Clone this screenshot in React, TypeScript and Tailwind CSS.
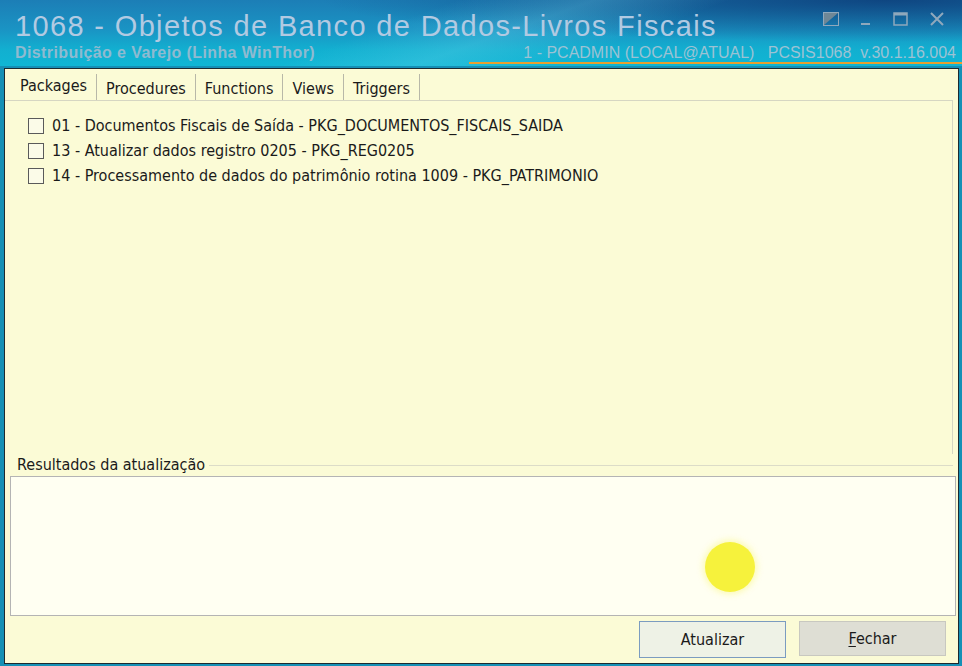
import { useState } from 'react';

const tabs = ['Packages', 'Procedures', 'Functions', 'Views', 'Triggers'];

const packages = [
  '01 - Documentos Fiscais de Saída - PKG_DOCUMENTOS_FISCAIS_SAIDA',
  '13 - Atualizar dados registro 0205 - PKG_REG0205',
  '14 - Processamento de dados do patrimônio rotina 1009 - PKG_PATRIMONIO',
];

const uiFont = { fontFamily: '"DejaVu Sans Condensed", "DejaVu Sans", sans-serif' };

const TitleBar = () => (
  <div className="relative h-[66px] bg-[linear-gradient(to_bottom,#1c7eb6_0%,#1a94c4_45%,#12afd0_75%,#10b6d4_100%)] overflow-hidden">
    {/* dark corner and light swoosh of the glass frame */}
    <div className="absolute inset-0 bg-[radial-gradient(ellipse_at_92%_0%,rgba(12,60,120,0.85)_0%,rgba(12,60,120,0)_45%)]" />
    <div className="absolute inset-0 bg-[linear-gradient(160deg,rgba(255,255,255,0)_40%,rgba(120,220,240,0.25)_52%,rgba(255,255,255,0)_64%)]" />
    <div className="relative flex items-start justify-between pl-[15px] pr-4 pt-[9px]">
      <h1 className="text-[29px] leading-[34px] tracking-[1.35px] text-[#b2cae2] font-['Liberation_Sans',sans-serif]">
        1068 - Objetos de Banco de Dados-Livros Fiscais
      </h1>
      <div className="flex items-center gap-[22px] pt-[3px] pr-[2px] text-[#8fa8bc]">
        <svg width="16" height="14" viewBox="0 0 16 14">
          <rect x="0.5" y="0.5" width="15" height="13" fill="none" stroke="currentColor" />
          <path d="M1 13 L1 1 L15 1 Z" fill="#6f8796" />
        </svg>
        <svg width="10" height="14" viewBox="0 0 10 14">
          <rect x="0" y="11" width="9" height="2" fill="currentColor" />
        </svg>
        <svg width="15" height="14" viewBox="0 0 15 14">
          <rect x="1" y="1" width="13" height="12" fill="none" stroke="currentColor" strokeWidth="1.5" />
          <rect x="1" y="1" width="13" height="2.5" fill="currentColor" />
        </svg>
        <svg width="14" height="14" viewBox="0 0 14 14">
          <path d="M1 1 L13 13 M13 1 L1 13" stroke="currentColor" strokeWidth="2" />
        </svg>
      </div>
    </div>
    <div className="relative flex items-end justify-between pl-[15px] pr-[6px] mt-[1px] leading-[18px] font-['Liberation_Sans',sans-serif]">
      <span className="text-[16px] font-bold tracking-[0.4px] text-[#8fbad0]">Distribuição e Varejo (Linha WinThor)</span>
      <span className="text-[16px] text-[#9cc2d4] whitespace-pre">
        1 - PCADMIN (LOCAL@ATUAL)   PCSIS1068  v.30.1.16.004
      </span>
    </div>
    <div className="absolute left-[469px] right-0 bottom-[2px] h-[2px] bg-[#e8a030]" />
  </div>
);

const App = () => {
  const [active, setActive] = useState(0);
  const [checked, setChecked] = useState<boolean[]>([false, false, false]);

  return (
    <div className="w-[962px] h-[666px] bg-[#1590b6] flex flex-col overflow-hidden" style={uiFont}>
      <TitleBar />
      <div className="flex-1 ml-[4px] mr-[3px] mt-[2px] border border-[#1c2a30] bg-[#fbfbd6] flex flex-col text-[#1a1a1a]">
        {/* Tab strip */}
        <div className="flex items-end h-[31px] pl-[6px] pt-[4px]">
          {tabs.map((t, i) => (
            <button
              key={t}
              onClick={() => setActive(i)}
              className={`h-[26px] px-[9px] text-[16px] flex items-center border-r border-[#b8b8a8] ${
                i === active ? 'bg-[#fbfbd6] pb-[3px]' : 'pt-[3px]'
              }`}
            >
              {t}
            </button>
          ))}
        </div>

        {/* Tab page */}
        <div className="h-[354px] mr-[5px] border-t border-r border-[#d6d6c2] pl-[23px] pt-[16px] flex flex-col gap-[7px]">
          {packages.map((p, i) => (
            <label key={p} className="flex items-center gap-[8px] text-[16px] leading-[18px] cursor-pointer">
              <span
                onClick={() => setChecked((c) => c.map((v, j) => (j === i ? !v : v)))}
                className="w-[16px] h-[16px] border border-[#5a5a5a] bg-[#fbfbe8] flex items-center justify-center"
              >
                {checked[i] && (
                  <svg width="11" height="11" viewBox="0 0 11 11">
                    <path d="M1 5.5 L4 8.5 L10 1.5" stroke="#222" strokeWidth="1.6" fill="none" />
                  </svg>
                )}
              </span>
              {p}
            </label>
          ))}
        </div>

        {/* Results group */}
        <div className="flex items-center gap-[4px] pl-[12px] pr-[5px] h-[22px]">
          <span className="text-[16px] leading-[18px]">Resultados da atualização</span>
          <div className="flex-1 h-px bg-[#dcdcc8] mt-[1px]" />
        </div>
        <div className="relative ml-[5px] mr-[2px] h-[140px] border border-[#b4b4b4] bg-[#fffff2]">
          <div className="absolute left-[694px] top-[65px] w-[50px] h-[50px] rounded-full bg-[#f6f23c] shadow-[0_0_6px_2px_rgba(246,242,60,0.35)]" />
        </div>

        {/* Buttons */}
        <div className="flex justify-end gap-[13px] pr-[12px] pt-[5px]">
          <button className="w-[147px] h-[37px] border border-[#7b9cc0] bg-[#eef2e6] text-[16px]">Atualizar</button>
          <button className="w-[147px] h-[35px] border border-[#c8c8c0] bg-[#deded4] text-[16px]">
            <span className="underline underline-offset-2">F</span>echar
          </button>
        </div>
      </div>
      <div className="h-[2px]" />
    </div>
  );
};

export default App;
